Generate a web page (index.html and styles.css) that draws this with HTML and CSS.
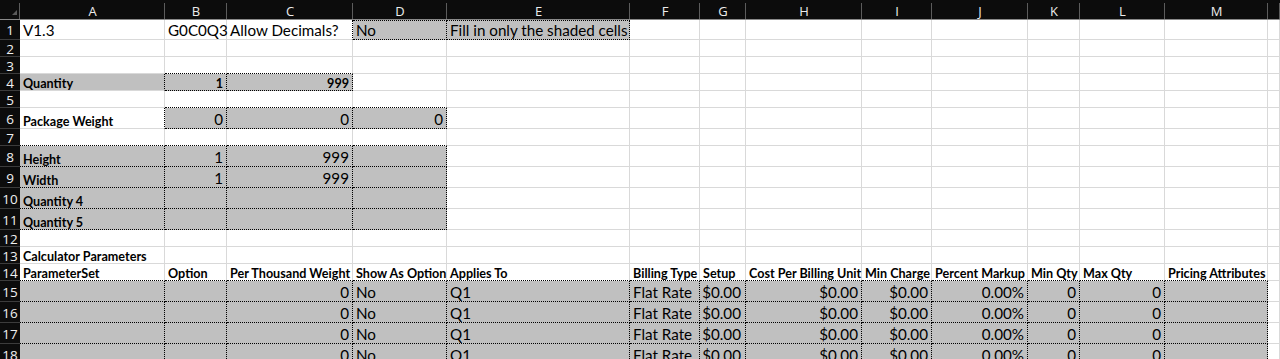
FILE: index.html
```html
<!DOCTYPE html>
<html lang="en">
<head>
<meta charset="utf-8">
<title>Calculator Sheet</title>
<link rel="stylesheet" href="styles.css">
</head>
<body>
<div class="sheet">
  <!-- column headers -->
  <div class="ch corner"><svg width="20" height="20" viewBox="0 0 20 20"><polygon points="17,10 17,15 12,15" fill="#5a5a5a"/></svg></div>
  <div class="ch">A</div><div class="ch">B</div><div class="ch">C</div><div class="ch">D</div><div class="ch">E</div><div class="ch">F</div><div class="ch">G</div><div class="ch">H</div><div class="ch">I</div><div class="ch">J</div><div class="ch">K</div><div class="ch">L</div><div class="ch">M</div><div class="ch"></div>

  <!-- row 1 -->
  <div class="rh">1</div>
  <div class="c b">V1.3</div><div class="c b">G0C0Q3</div><div class="c b dr">Allow Decimals?</div><div class="c b f dt dr db">No</div><div class="c b f dt dr db">Fill in only the shaded cells</div>
  <div class="c"></div><div class="c"></div><div class="c"></div><div class="c"></div><div class="c"></div><div class="c"></div><div class="c"></div><div class="c"></div><div class="c"></div>

  <!-- row 2 -->
  <div class="rh">2</div>
  <div class="c"></div><div class="c"></div><div class="c"></div><div class="c"></div><div class="c"></div><div class="c"></div><div class="c"></div><div class="c"></div><div class="c"></div><div class="c"></div><div class="c"></div><div class="c"></div><div class="c"></div><div class="c"></div>

  <!-- row 3 -->
  <div class="rh">3</div>
  <div class="c"></div><div class="c db"></div><div class="c db"></div><div class="c"></div><div class="c"></div><div class="c"></div><div class="c"></div><div class="c"></div><div class="c"></div><div class="c"></div><div class="c"></div><div class="c"></div><div class="c"></div><div class="c"></div>

  <!-- row 4 -->
  <div class="rh">4</div>
  <div class="c s f dr">Quantity</div><div class="c s f r dr db">1</div><div class="c s f r dr db">999</div>
  <div class="c"></div><div class="c"></div><div class="c"></div><div class="c"></div><div class="c"></div><div class="c"></div><div class="c"></div><div class="c"></div><div class="c"></div><div class="c"></div><div class="c"></div>

  <!-- row 5 -->
  <div class="rh">5</div>
  <div class="c"></div><div class="c db"></div><div class="c db"></div><div class="c db"></div><div class="c"></div><div class="c"></div><div class="c"></div><div class="c"></div><div class="c"></div><div class="c"></div><div class="c"></div><div class="c"></div><div class="c"></div><div class="c"></div>

  <!-- row 6 -->
  <div class="rh">6</div>
  <div class="c s dr">Package Weight</div><div class="c b f r dr db">0</div><div class="c b f r dr db">0</div><div class="c b f r dr db">0</div>
  <div class="c"></div><div class="c"></div><div class="c"></div><div class="c"></div><div class="c"></div><div class="c"></div><div class="c"></div><div class="c"></div><div class="c"></div><div class="c"></div>

  <!-- row 7 -->
  <div class="rh">7</div>
  <div class="c db"></div><div class="c db"></div><div class="c db"></div><div class="c db"></div><div class="c"></div><div class="c"></div><div class="c"></div><div class="c"></div><div class="c"></div><div class="c"></div><div class="c"></div><div class="c"></div><div class="c"></div><div class="c"></div>

  <!-- row 8 -->
  <div class="rh">8</div>
  <div class="c s f dr db">Height</div><div class="c b f r dr db">1</div><div class="c b f r dr db">999</div><div class="c f dr db"></div>
  <div class="c"></div><div class="c"></div><div class="c"></div><div class="c"></div><div class="c"></div><div class="c"></div><div class="c"></div><div class="c"></div><div class="c"></div><div class="c"></div>

  <!-- row 9 -->
  <div class="rh">9</div>
  <div class="c s f dr db">Width</div><div class="c b f r dr db">1</div><div class="c b f r dr db">999</div><div class="c f dr db"></div>
  <div class="c"></div><div class="c"></div><div class="c"></div><div class="c"></div><div class="c"></div><div class="c"></div><div class="c"></div><div class="c"></div><div class="c"></div><div class="c"></div>

  <!-- row 10 -->
  <div class="rh">10</div>
  <div class="c s f dr db">Quantity 4</div><div class="c f dr db"></div><div class="c f dr db"></div><div class="c f dr db"></div>
  <div class="c"></div><div class="c"></div><div class="c"></div><div class="c"></div><div class="c"></div><div class="c"></div><div class="c"></div><div class="c"></div><div class="c"></div><div class="c"></div>

  <!-- row 11 -->
  <div class="rh">11</div>
  <div class="c s f dr db">Quantity 5</div><div class="c f dr db"></div><div class="c f dr db"></div><div class="c f dr db"></div>
  <div class="c"></div><div class="c"></div><div class="c"></div><div class="c"></div><div class="c"></div><div class="c"></div><div class="c"></div><div class="c"></div><div class="c"></div><div class="c"></div>

  <!-- row 12 -->
  <div class="rh">12</div>
  <div class="c"></div><div class="c"></div><div class="c"></div><div class="c"></div><div class="c"></div><div class="c"></div><div class="c"></div><div class="c"></div><div class="c"></div><div class="c"></div><div class="c"></div><div class="c"></div><div class="c"></div><div class="c"></div>

  <!-- row 13 -->
  <div class="rh">13</div>
  <div class="c s">Calculator Parameters</div><div class="c"></div><div class="c"></div><div class="c"></div><div class="c"></div><div class="c"></div><div class="c"></div><div class="c"></div><div class="c"></div><div class="c"></div><div class="c"></div><div class="c"></div><div class="c"></div><div class="c"></div>

  <!-- row 14: parameter table headings -->
  <div class="rh">14</div>
  <div class="c s db">ParameterSet</div><div class="c s db">Option</div><div class="c s db">Per Thousand Weight</div><div class="c s db">Show As Option</div><div class="c s db">Applies To</div><div class="c s db">Billing Type</div><div class="c s db">Setup</div><div class="c s db">Cost Per Billing Unit</div><div class="c s db">Min Charge</div><div class="c s db">Percent Markup</div><div class="c s db">Min Qty</div><div class="c s db">Max Qty</div><div class="c s db">Pricing Attributes</div><div class="c"></div>

  <!-- rows 15-18: parameter rows -->
  <div class="rh">15</div>
  <div class="c f dr db"></div><div class="c f dr db"></div><div class="c b f r dr db">0</div><div class="c b f dr db">No</div><div class="c b f dr db">Q1</div><div class="c b f dr db">Flat Rate</div><div class="c b f r cur dr db">$0.00</div><div class="c b f r dr db">$0.00</div><div class="c b f r dr db">$0.00</div><div class="c b f r dr db">0.00%</div><div class="c b f r dr db">0</div><div class="c b f r dr db">0</div><div class="c f dr db"></div><div class="c"></div>

  <div class="rh">16</div>
  <div class="c f dr db"></div><div class="c f dr db"></div><div class="c b f r dr db">0</div><div class="c b f dr db">No</div><div class="c b f dr db">Q1</div><div class="c b f dr db">Flat Rate</div><div class="c b f r cur dr db">$0.00</div><div class="c b f r dr db">$0.00</div><div class="c b f r dr db">$0.00</div><div class="c b f r dr db">0.00%</div><div class="c b f r dr db">0</div><div class="c b f r dr db">0</div><div class="c f dr db"></div><div class="c"></div>

  <div class="rh">17</div>
  <div class="c f dr db"></div><div class="c f dr db"></div><div class="c b f r dr db">0</div><div class="c b f dr db">No</div><div class="c b f dr db">Q1</div><div class="c b f dr db">Flat Rate</div><div class="c b f r cur dr db">$0.00</div><div class="c b f r dr db">$0.00</div><div class="c b f r dr db">$0.00</div><div class="c b f r dr db">0.00%</div><div class="c b f r dr db">0</div><div class="c b f r dr db">0</div><div class="c f dr db"></div><div class="c"></div>

  <div class="rh">18</div>
  <div class="c f dr db"></div><div class="c f dr db"></div><div class="c b f r dr db">0</div><div class="c b f dr db">No</div><div class="c b f dr db">Q1</div><div class="c b f dr db">Flat Rate</div><div class="c b f r cur dr db">$0.00</div><div class="c b f r dr db">$0.00</div><div class="c b f r dr db">$0.00</div><div class="c b f r dr db">0.00%</div><div class="c b f r dr db">0</div><div class="c b f r dr db">0</div><div class="c f dr db"></div><div class="c"></div>
</div>
</body>
</html>
```
FILE: styles.css
```css
html, body {
  margin: 0;
  padding: 0;
  background: #ffffff;
}

.sheet {
  display: grid;
  width: 1280px;
  height: 359px;
  overflow: hidden;
  grid-template-columns: 20px 145px 62px 126px 94px 183px 70px 46px 116px 70px 96px 52px 85px 103px 1fr;
  grid-template-rows: 20px 20px 17px 17px 17px 17px 21px 17px 21px 21px 21px 21px 17px 17px 17px 21px 21px 21px 21px;
  font-family: "Lato", sans-serif;
  color: #000;
}

/* column letter headers */
.ch {
  box-sizing: border-box;
  display: flex;
  justify-content: center;
  align-items: center;
  padding-top: 2px;
  font-family: "Open Sans", "Noto Sans", sans-serif;
  font-size: 13px;
  color: #ececec;
  background:
    linear-gradient(#8a8a8a, #8a8a8a) 0 100% / 100% 1px no-repeat,
    linear-gradient(#5c5c5c, #5c5c5c) 100% 3px / 1px 16px no-repeat,
    #0c0c0c;
}

.corner {
  padding: 0;
  display: block;
}

.corner svg {
  display: block;
}

/* row number headers */
.rh {
  box-sizing: border-box;
  display: flex;
  justify-content: center;
  align-items: center;
  padding-top: 1px;
  background: #0c0c0c;
  border-bottom: 1px solid #3c3c3c;
  font-family: "Open Sans", "Noto Sans", sans-serif;
  font-size: 13.5px;
  color: #f0f0f0;
}

/* worksheet cells */
.c {
  box-sizing: border-box;
  display: flex;
  align-items: flex-end;
  padding: 0 3px 1px 3px;
  border-right: 1px solid #d9d9d9;
  border-bottom: 1px solid #d9d9d9;
  white-space: nowrap;
  min-width: 0;
}

/* 12pt regular text */
.b {
  font-size: 15.2px;
  line-height: 16px;
}

/* 10pt bold labels */
.s {
  font-size: 12.6px;
  line-height: 13px;
  font-weight: 700;
  padding-bottom: 0;
}

/* right aligned numbers */
.r {
  justify-content: flex-end;
}

.cur {
  padding-right: 4px;
}

/* shaded input cells */
.f {
  background: #c0c0c0;
}

/* hair (dotted) borders */
.db {
  border-bottom: 1px dotted #000;
}

.dr {
  border-right: 1px dotted #000;
}

.dt {
  border-top: 1px dotted #000;
}
```
